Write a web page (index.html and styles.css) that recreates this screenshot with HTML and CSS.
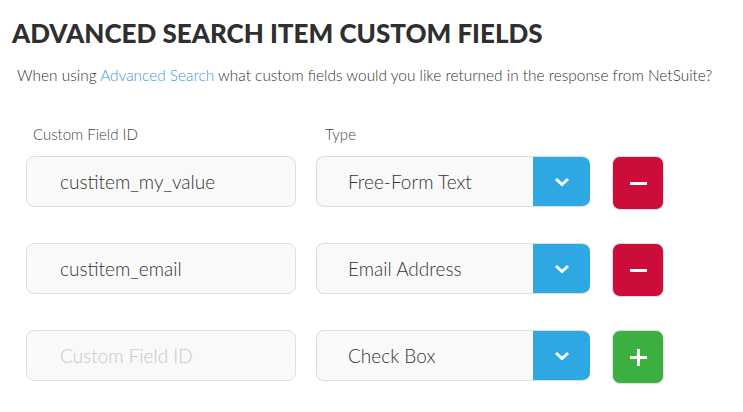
FILE: index.html
```html
<!DOCTYPE html>
<html>
<head>
<meta charset="utf-8">
<link rel="stylesheet" href="styles.css">
</head>
<body>
<div class="page">
  <h1 class="title">ADVANCED SEARCH ITEM CUSTOM FIELDS</h1>
  <p class="intro">When using <a class="link" href="#">Advanced Search</a> what custom fields would you like returned in the response from NetSuite?</p>
  <div class="form">
    <div class="labels">
      <span class="label label-id">Custom Field ID</span>
      <span class="label label-type">Type</span>
    </div>
    <div class="row">
      <div class="field"><span class="value">custitem_my_value</span></div>
      <div class="select"><span class="select-text">Free-Form Text</span><span class="select-btn"><svg width="16" height="10" viewBox="0 0 16 10"><path d="M2 2 L8 7.5 L14 2" fill="none" stroke="#fff" stroke-width="3"/></svg></span></div>
      <button class="action remove"><span class="bar"></span></button>
    </div>
    <div class="row">
      <div class="field"><span class="value">custitem_email</span></div>
      <div class="select"><span class="select-text">Email Address</span><span class="select-btn"><svg width="16" height="10" viewBox="0 0 16 10"><path d="M2 2 L8 7.5 L14 2" fill="none" stroke="#fff" stroke-width="3"/></svg></span></div>
      <button class="action remove"><span class="bar"></span></button>
    </div>
    <div class="row">
      <div class="field"><span class="value placeholder">Custom Field ID</span></div>
      <div class="select"><span class="select-text">Check Box</span><span class="select-btn"><svg width="16" height="10" viewBox="0 0 16 10"><path d="M2 2 L8 7.5 L14 2" fill="none" stroke="#fff" stroke-width="3"/></svg></span></div>
      <button class="action add"><span class="bar"></span><span class="bar vertical"></span></button>
    </div>
  </div>
</div>
</body>
</html>
```
FILE: styles.css
```css
html, body {
  margin: 0;
  padding: 0;
  background: #ffffff;
}
.page {
  font-family: "Lato", "Noto Sans", sans-serif;
  color: #333333;
  padding: 17px 0 0 12px;
}
.title {
  margin: 0;
  font-family: "Lato", sans-serif;
  font-weight: 900;
  font-size: 26px;
  line-height: 32px;
  letter-spacing: 0;
  color: #2f2f2f;
}
.intro {
  margin: 16px 0 0 5px;
  font-size: 15.4px;
  line-height: 20px;
  font-weight: 300;
  color: #333;
}
.link {
  color: #3a9ad9;
  text-decoration: none;
}
.form {
  margin: 40px 0 0 14px;
  display: flex;
  flex-direction: column;
}
.labels {
  display: flex;
  height: 20px;
  margin-bottom: 11px;
  font-size: 15px;
  font-weight: 300;
  color: #444;
}
.label-id {
  margin-left: 7px;
  width: 292px;
}
.row {
  display: flex;
  align-items: flex-start;
  margin-bottom: 33px;
}
.field {
  box-sizing: border-box;
  width: 270px;
  height: 51px;
  border: 1px solid #dedede;
  border-radius: 8px;
  background: #f9f9f9;
  display: flex;
  align-items: center;
  padding-left: 33px;
  font-size: 19px;
  font-weight: 300;
  color: #333;
}
.placeholder {
  color: #c8c8c8;
}
.select {
  box-sizing: border-box;
  margin-left: 20px;
  width: 274px;
  height: 51px;
  border: 1px solid #dedede;
  border-right: none;
  border-radius: 8px;
  background: #f9f9f9;
  display: flex;
  align-items: stretch;
  overflow: hidden;
}
.select-text {
  flex: 1;
  display: flex;
  align-items: center;
  padding-left: 31px;
  font-size: 19px;
  font-weight: 300;
  color: #333;
}
.select-btn {
  width: 57px;
  margin: -1px 0;
  background: #2ea8e2;
  display: flex;
  align-items: center;
  justify-content: center;
}
.action {
  margin-left: 22px;
  width: 52px;
  height: 54px;
  border: 1px solid #e0e0e0;
  border-radius: 8px;
  position: relative;
  padding: 0;
  cursor: pointer;
}
.remove {
  background: #cc0c39;
}
.add {
  background: #3bb040;
}
.bar {
  position: absolute;
  left: 50%;
  top: 50%;
  width: 17px;
  height: 3px;
  margin: -1.5px 0 0 -8.5px;
  background: #fff;
}
.bar.vertical {
  width: 3px;
  height: 17px;
  margin: -8.5px 0 0 -1.5px;
}
```
